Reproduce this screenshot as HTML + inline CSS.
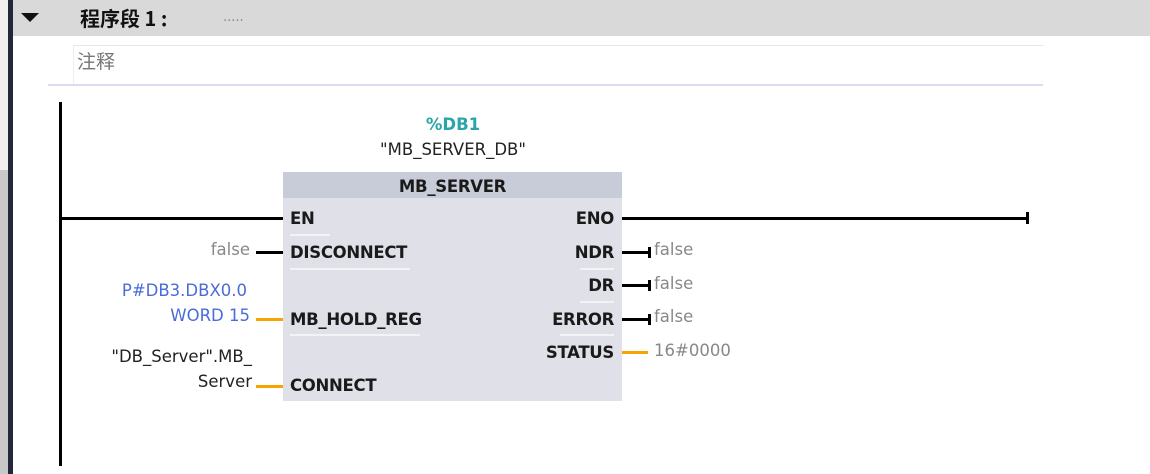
<!DOCTYPE html>
<html><head><meta charset="utf-8"><style>
body{margin:0;width:1150px;height:474px;background:#fff;position:relative;overflow:hidden;font-family:"DejaVu Sans","Liberation Sans","Noto Sans CJK SC",sans-serif;}
div{position:absolute;}
.t{white-space:nowrap;font-size:16.5px;line-height:20px;}
.pin{color:#1a1a1a;font-size:16.5px;font-weight:bold;letter-spacing:-0.3px}
.r{text-align:right;}
.g{color:#888;}
.bl{background:#000;}
.or{background:#f7a400;}
.ul{height:2px;background:#f2f3f6;}
</style></head><body>
<div style="left:0;top:0;width:8px;height:474px;background:#c8c8c8"></div>
<div style="left:0;top:0;width:8px;height:170px;background:#efefef"></div>
<div style="left:8px;top:0;width:5px;height:474px;background:#232838"></div>
<div style="left:13px;top:0;width:1137px;height:36px;background:#d9d9d9"></div>
<div style="left:21px;top:13px;width:0;height:0;border-left:9px solid transparent;border-right:9px solid transparent;border-top:9px solid #111"></div>
<div class="t" style="left:80px;top:6px;font-size:20px;font-weight:bold;color:#111;font-family:'Noto Sans CJK SC',sans-serif;line-height:24px">程序段 1 :</div>
<div class="t" style="left:223px;top:8px;color:#888;font-size:13px">.....</div>
<div style="left:73px;top:45px;width:970px;height:38px;border-top:1px solid #e8e8e8;border-left:1px solid #eee"></div>
<div class="t" style="left:77px;top:49px;color:#777;font-size:19px;font-family:'Noto Sans CJK SC',sans-serif;line-height:24px">注释</div>
<div style="left:48px;top:84px;width:995px;height:2px;background:#dcdcf0"></div>
<div class="bl" style="left:59px;top:102px;width:3px;height:364px"></div>
<div class="t" style="left:380px;top:115px;width:146px;text-align:center;color:#2aa5a8;font-weight:bold">%DB1</div>
<div class="t" style="left:350px;top:140px;width:206px;text-align:center;color:#222">"MB_SERVER_DB"</div>
<div style="left:283px;top:172px;width:339px;height:229px;background:#dfe0e8"></div>
<div style="left:283px;top:172px;width:339px;height:26px;background:#c8cbd8"></div>
<div class="t pin" style="left:283px;top:177px;width:339px;text-align:center">MB_SERVER</div>
<div class="t pin" style="left:290px;top:209px">EN</div>
<div class="ul" style="left:290px;top:234px;width:40px"></div>
<div class="t pin" style="left:290px;top:243px">DISCONNECT</div>
<div class="ul" style="left:290px;top:268px;width:120px"></div>
<div class="t pin" style="left:290px;top:310px">MB_HOLD_REG</div>
<div class="ul" style="left:290px;top:334px;width:130px"></div>
<div class="t pin" style="left:290px;top:376px">CONNECT</div>
<div class="t pin r" style="left:500px;top:209px;width:114px">ENO</div>
<div class="t pin r" style="left:500px;top:243px;width:114px">NDR</div>
<div class="ul" style="left:580px;top:268px;width:34px"></div>
<div class="t pin r" style="left:500px;top:276px;width:114px">DR</div>
<div class="ul" style="left:580px;top:301px;width:34px"></div>
<div class="t pin r" style="left:500px;top:310px;width:114px">ERROR</div>
<div class="ul" style="left:560px;top:334px;width:54px"></div>
<div class="t pin r" style="left:500px;top:343px;width:114px">STATUS</div>
<div class="bl" style="left:62px;top:217px;width:221px;height:3px"></div>
<div class="bl" style="left:622px;top:217px;width:406px;height:3px"></div>
<div class="bl" style="left:1026px;top:212px;width:3px;height:12px"></div>
<div class="bl" style="left:256px;top:251px;width:27px;height:3px"></div>
<div class="or" style="left:256px;top:318px;width:27px;height:3px"></div>
<div class="or" style="left:256px;top:385px;width:27px;height:3px"></div>
<div class="t g r" style="left:150px;top:240px;width:100px">false</div>
<div class="t r" style="left:60px;top:281px;width:187px;color:#4a6cd8">P#DB3.DBX0.0</div>
<div class="t r" style="left:60px;top:306px;width:190px;color:#4a6cd8">WORD 15</div>
<div class="t r" style="left:40px;top:347px;width:212px;color:#222">"DB_Server".MB_</div>
<div class="t r" style="left:40px;top:372px;width:212px;color:#222">Server</div>
<div class="bl" style="left:622px;top:251px;width:27px;height:3px"></div><div class="bl" style="left:648px;top:247px;width:3px;height:11px"></div>
<div class="bl" style="left:622px;top:284px;width:27px;height:3px"></div><div class="bl" style="left:648px;top:280px;width:3px;height:11px"></div>
<div class="bl" style="left:622px;top:318px;width:27px;height:3px"></div><div class="bl" style="left:648px;top:314px;width:3px;height:11px"></div>
<div class="or" style="left:622px;top:351px;width:26px;height:3px"></div>
<div class="t g" style="left:654px;top:240px">false</div>
<div class="t g" style="left:654px;top:274px">false</div>
<div class="t g" style="left:654px;top:307px">false</div>
<div class="t g" style="left:654px;top:341px">16#0000</div>
</body></html>
